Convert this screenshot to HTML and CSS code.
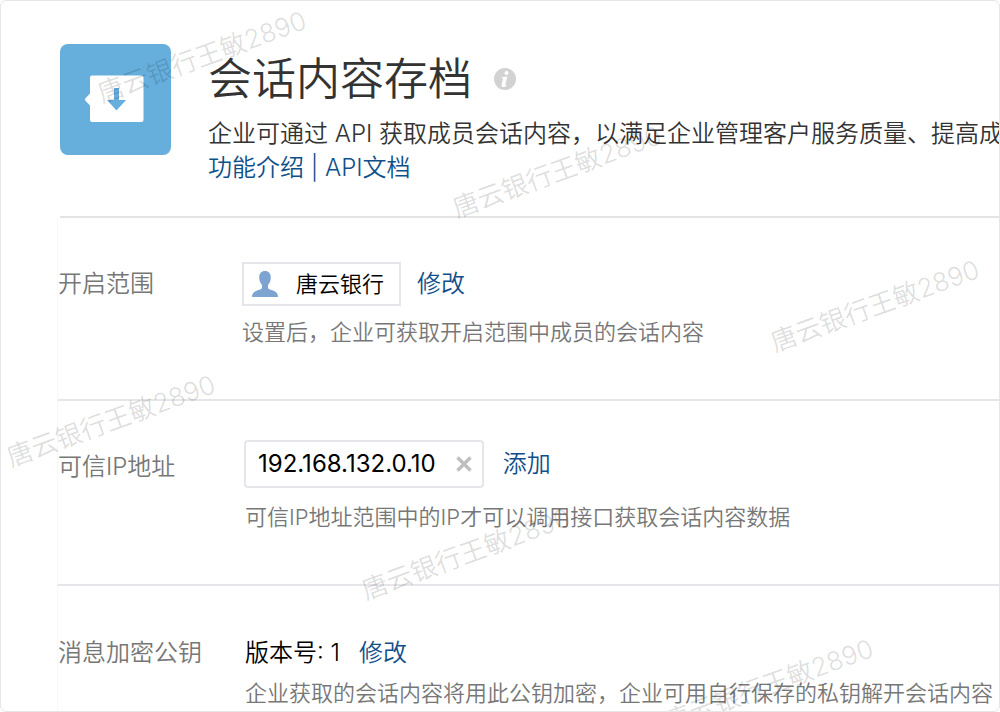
FILE: index.html
```html
<!DOCTYPE html>
<html lang="zh-CN">
<head>
<meta charset="utf-8">
<title>会话内容存档</title>
<link rel="stylesheet" href="styles.css">
</head>
<body>
<main class="panel">
  <header class="intro">
    <svg class="app-icon" viewBox="0 0 111 111" aria-hidden="true">
      <rect width="111" height="111" rx="8" fill="#66afdd"/>
      <path d="M32 31.500H81.500a2 2 0 0 1 2 2V76a2 2 0 0 1-2 2H32a2 2 0 0 1-2-2V61.500L25.500 56.800a2 2 0 0 1 0-2.600L30 49.500V33.500a2 2 0 0 1 2-2z" fill="#fff"/>
      <path d="M54 44h5v12h7L56.500 66.500 47 56h7z" fill="#66afdd"/>
    </svg>
    <div class="intro-text">
      <div class="title-row">
        <h1 class="title">会话内容存档</h1>
        <button class="info" type="button" aria-label="说明">
          <svg viewBox="0 0 22 22" width="22" height="22" aria-hidden="true">
            <circle cx="11" cy="11" r="11" fill="#d2d2d2"/>
            <circle cx="12.500" cy="5" r="2" fill="#fff"/>
            <path d="M7.500 9.200 13.300 8.600 11.300 16.500c-.2.900.5.900 2 0-1 1.700-2.200 2.500-3.700 2.500-1.700 0-2.400-1-2-2.600L9 10.800c.1-.6-.3-.8-1.500-.9z" fill="#fff"/>
          </svg>
        </button>
      </div>
      <p class="summary">企业可通过 API 获取成员会话内容，以满足企业管理客户服务质量、提高成</p>
      <nav class="docs"><a href="#intro">功能介绍</a> | <a href="#api">API文档</a></nav>
    </div>
  </header>

  <section class="row">
    <h2 class="label">开启范围</h2>
    <div class="field">
      <div class="line">
        <span class="member">
          <svg viewBox="0 0 26 26" width="26" height="26" aria-hidden="true">
            <path d="M13 0c3.600 0 5.800 2.600 5.800 6.300 0 3.400-1.200 6-2.800 7.600v2.600c0 1.300 1 1.800 3.600 2.600C23.500 20.300 26 22 26 26H0c0-4 2.500-5.700 6.400-6.900C9 18.300 10 17.800 10 16.500v-2.600C8.400 12.300 7.200 9.700 7.200 6.300 7.200 2.600 9.400 0 13 0z" fill="#7da3d1"/>
          </svg>
          <span>唐云银行</span>
        </span>
        <a href="#scope">修改</a>
      </div>
      <p class="hint">设置后，企业可获取开启范围中成员的会话内容</p>
    </div>
  </section>

  <section class="row row-address">
    <h2 class="label">可信IP地址</h2>
    <div class="field field-inset">
      <div class="line line-wide">
        <span class="address">
          <span>192.168.132.0.10</span>
          <button class="remove" type="button" aria-label="删除">
            <svg viewBox="0 0 16 16" width="16" height="16" aria-hidden="true"><path d="M1.500 1.500l13 13M14.500 1.500l-13 13" stroke="#bfbfbf" stroke-width="3.400"/></svg>
          </button>
        </span>
        <a href="#add">添加</a>
      </div>
      <p class="hint hint-inset">可信IP地址范围中的IP才可以调用接口获取会话内容数据</p>
    </div>
  </section>

  <section class="row row-key">
    <h2 class="label">消息加密公钥</h2>
    <div class="field field-inset">
      <div class="line line-wide line-text"><span>版本号: 1</span><a href="#key">修改</a></div>
      <p class="hint hint-inset">企业获取的会话内容将用此公钥加密，企业可用自行保存的私钥解开会话内容</p>
    </div>
  </section>

  <div class="watermarks" aria-hidden="true">
    <span class="mark m1">唐云银行王敏2890</span>
    <span class="mark m2">唐云银行王敏2890</span>
    <span class="mark m3">唐云银行王敏2890</span>
    <span class="mark m4">唐云银行王敏2890</span>
    <span class="mark m5">唐云银行王敏2890</span>
    <span class="mark m6">唐云银行王敏2890</span>
  </div>
</main>
</body>
</html>
```
FILE: styles.css
```css
* { box-sizing: border-box; }

body {
  margin: 0;
  background: #fff;
  color: #333;
  font: 350 24px/32px Inter, "Noto Sans CJK SC", sans-serif;
}

h1, h2, p { margin: 0; font-weight: 350; }

a { color: #10508a; text-decoration: none; }

button { padding: 0; border: 0; background: none; display: flex; cursor: pointer; }

.panel {
  position: relative;
  height: 100vh;
  padding-left: 56px;
  overflow: hidden;
  border: 1px solid #e6e6e6;
  border-radius: 6px;
  white-space: nowrap;
}

.intro {
  display: flex;
  gap: 37px;
  margin-left: 3px;
  padding: 43px 0 32px;
  border-bottom: 2px solid #e4e4e6;
}

.app-icon { width: 111px; height: 111px; flex: none; }

.title-row { display: flex; align-items: center; gap: 22px; }

.title { font-size: 44px; line-height: 70px; }

.summary { padding-top: 4px; }

.docs { padding-top: 2px; color: #10508a; }

.row {
  display: grid;
  grid-template-columns: 184px 1fr;
  padding: 44px 0 51px;
  border-bottom: 2px solid #e6e6ea;
  border-left: 1px solid #f8f8f8;
}

.row:last-of-type { border-bottom: 0; }

.label { padding-top: 6px; font-size: 24px; color: #777; }

.field-inset { padding-left: 2px; }

.line { display: flex; align-items: center; gap: 16px; min-height: 44px; color: #000; }

.line-wide { gap: 19px; }

.line-text { padding-left: 1px; }

.member {
  display: flex;
  align-items: center;
  gap: 18px;
  height: 44px;
  padding: 0 15px 0 8px;
  border: 2px solid #e6e6ea;
  font-size: 22px;
}

.address {
  display: flex;
  align-items: center;
  gap: 20px;
  height: 48px;
  padding: 0 10px 0 12px;
  border: 2px solid #e6e6ea;
  border-radius: 4px;
  font-weight: 400;
}

.hint { padding-top: 10px; font-size: 22px; color: #777; }

.hint-inset { padding-left: 1px; }

.row-address { padding-top: 39px; }

.row-address .label { padding-top: 11px; }

.row-address .hint { padding-top: 13px; }

.row-key { padding-top: 45px; }

.row-key .hint { padding-top: 2px; }

.watermarks { position: absolute; inset: 0; pointer-events: none; }

.mark {
  position: absolute;
  font-size: 26px;
  line-height: 32px;
  color: rgba(0, 0, 0, 0.15);
  transform: translate(-50%, -50%) rotate(-20deg);
}

.m1 { left: 201px; top: 56px; }
.m2 { left: 556px; top: 171px; }
.m3 { left: 874px; top: 305px; }
.m4 { left: 110px; top: 420px; }
.m5 { left: 465px; top: 553px; }
.m6 { left: 768px; top: 684px; }
```
